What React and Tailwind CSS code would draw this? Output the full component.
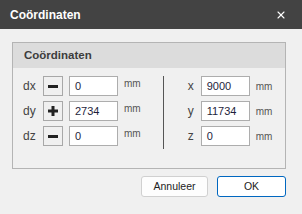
import { X } from 'lucide-react'

const font = { fontFamily: '"Liberation Sans", Arial, sans-serif' }

function SignButton({ sign }) {
  return (
    <div className="w-[20px] h-[20px] border border-[#a8a8a8] bg-[#f0f0f0] flex items-center justify-center shrink-0">
      {sign === 'plus' ? (
        <svg width="10" height="10" viewBox="0 0 10 10">
          <rect x="0" y="3.5" width="10" height="3" fill="#222" />
          <rect x="3.5" y="0" width="3" height="10" fill="#222" />
        </svg>
      ) : (
        <svg width="10" height="3" viewBox="0 0 10 3">
          <rect x="0" y="0" width="10" height="3" fill="#222" />
        </svg>
      )}
    </div>
  )
}

function Field({ value }) {
  return (
    <div className="w-[49px] h-[20px] border border-[#adadad] bg-white flex items-center pl-[5px] text-[11px] text-[#1e1e3c] shrink-0">
      {value}
    </div>
  )
}

const left = [
  { label: 'dx', sign: 'minus', value: '0' },
  { label: 'dy', sign: 'plus', value: '2734' },
  { label: 'dz', sign: 'minus', value: '0' },
]

const right = [
  { label: 'x', value: '9000' },
  { label: 'y', value: '11734' },
  { label: 'z', value: '0' },
]

export default function App() {
  return (
    <div className="w-[302px] h-[214px] bg-[#f0f0f0] flex flex-col overflow-hidden" style={font}>
      {/* Title bar */}
      <div className="h-[29px] bg-[#434343] flex items-center justify-between pl-[10px] pr-[15px] shrink-0">
        <span className="text-white font-bold text-[12px]">Coördinaten</span>
        <X size={12} strokeWidth={2.2} className="text-white" />
      </div>

      {/* Group box */}
      <div className="ml-[12px] mt-[13px] w-[274px] h-[127px] border border-[#b4b4b4] flex flex-col">
        <div className="h-[25px] bg-[#dcdcdc] flex items-center pl-[11px] text-[11.5px] font-bold text-[#3c3c3c]">
          Coördinaten
        </div>
        <div className="flex mt-[8px]">
          <div className="flex flex-col gap-[5px] pl-[10px]">
            {left.map((r) => (
              <div key={r.label} className="flex items-center h-[20px]">
                <span className="w-[20px] text-[12px] text-[#444]">{r.label}</span>
                <SignButton sign={r.sign} />
                <div className="ml-[6px]">
                  <Field value={r.value} />
                </div>
                <span className="ml-[6px] text-[10px] text-[#555] -mt-[5px]">mm</span>
              </div>
            ))}
          </div>
          <div className="ml-[22px] w-px h-[73px] bg-[#555]" />
          <div className="flex flex-col gap-[5px] ml-[17px]">
            {right.map((r) => (
              <div key={r.label} className="flex items-center h-[20px]">
                <span className="w-[13px] text-right text-[12px] text-[#444]">{r.label}</span>
                <div className="ml-[7px]">
                  <Field value={r.value} />
                </div>
                <span className="ml-[6px] text-[10px] text-[#555]">mm</span>
              </div>
            ))}
          </div>
        </div>
      </div>

      {/* Buttons */}
      <div className="flex justify-end gap-[9px] mt-[7px] pr-[16px]">
        <button className="w-[67px] h-[21px] rounded-[3px] border border-[#d0d0d0] bg-[#fdfdfd] text-[10.5px] text-[#222]">
          Annuleer
        </button>
        <button className="w-[69px] h-[21px] rounded-[3px] border-[1.5px] border-[#0067c0] bg-white text-[10.5px] text-[#222]">
          OK
        </button>
      </div>
    </div>
  )
}
